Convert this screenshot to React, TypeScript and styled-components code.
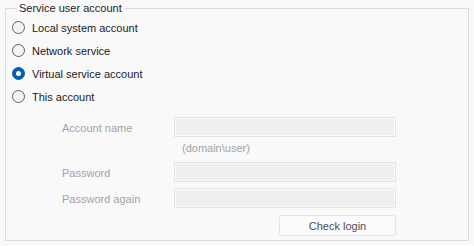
import React, { useState } from "react";
import styled, { createGlobalStyle } from "styled-components";

const GlobalStyle = createGlobalStyle`
  html, body {
    margin: 0;
    padding: 0;
    background: #f9f9f9;
  }
  body {
    font-family: "Liberation Sans", Arial, sans-serif;
    font-size: 11px;
    color: #1b1b1b;
  }
`;

const options = [
  "Local system account",
  "Network service",
  "Virtual service account",
  "This account",
];

const App = () => {
  const [selected, setSelected] = useState(2);
  const enabled = selected === 3;

  return (
    <Page>
      <GlobalStyle />
      <GroupBox>
        <Legend>Service user account</Legend>
        {options.map((label, i) => (
          <RadioRow key={label} onClick={() => setSelected(i)}>
            <RadioCircle $checked={selected === i} />
            <RadioLabel>{label}</RadioLabel>
          </RadioRow>
        ))}

        <FormGrid>
          <FieldLabel $disabled={!enabled}>Account name</FieldLabel>
          <TextBox disabled={!enabled} />
          <span />
          <Hint $disabled={!enabled}>(domain\user)</Hint>
          <FieldLabel $disabled={!enabled}>Password</FieldLabel>
          <TextBox type="password" disabled={!enabled} />
          <FieldLabel $disabled={!enabled}>Password again</FieldLabel>
          <TextBox type="password" disabled={!enabled} />
          <span />
          <ButtonRow>
            <CheckButton disabled={!enabled}>Check login</CheckButton>
          </ButtonRow>
        </FormGrid>
      </GroupBox>
    </Page>
  );
};

const Page = styled.div`
  width: 474px;
  height: 246px;
  padding: 0 5px;
  box-sizing: border-box;
`;

const GroupBox = styled.fieldset`
  margin: 0;
  padding: 0 0 0 5px;
  width: 464px;
  height: 241px;
  box-sizing: border-box;
  border: 1px solid #dcdcdc;
  border-radius: 0;
`;

const Legend = styled.legend`
  margin-left: 6px;
  padding: 0 2px;
  line-height: 16px;
  color: #1b1b1b;
`;

const RadioRow = styled.div`
  display: flex;
  align-items: center;
  height: 23px;
  cursor: default;
`;

const RadioCircle = styled.span<{ $checked: boolean }>`
  width: 13px;
  height: 13px;
  border-radius: 50%;
  box-sizing: border-box;
  margin-left: 1px;
  margin-right: 7px;
  flex-shrink: 0;
  position: relative;
  background: ${(p) => (p.$checked ? "#005fb8" : "#f4f4f4")};
  border: 1px solid ${(p) => (p.$checked ? "#005fb8" : "#606060")};

  &::after {
    content: "";
    display: ${(p) => (p.$checked ? "block" : "none")};
    position: absolute;
    left: 3px;
    top: 3px;
    width: 5px;
    height: 5px;
    border-radius: 50%;
    background: #ffffff;
  }
`;

const RadioLabel = styled.span`
  line-height: 16px;
`;

const FormGrid = styled.div`
  display: grid;
  grid-template-columns: 112px 222px;
  margin: 9px 0 0 51px;
  align-items: center;
`;

const FieldLabel = styled.span<{ $disabled: boolean }>`
  color: ${(p) => (p.$disabled ? "#a3a3a3" : "#1b1b1b")};
  margin-bottom: 6px;
  padding-top: 1px;
`;

const TextBox = styled.input`
  height: 20px;
  box-sizing: border-box;
  margin: 0 0 6px 0;
  border: 1px solid #e3e3e3;
  box-shadow: inset 0 0 0 1px #fafafa;
  background: #efefef;
  border-radius: 0;
  outline: none;
  font: inherit;
  padding: 0 4px;

  &:enabled {
    background: #ffffff;
    border-color: #8a8a8a;
  }
`;

const Hint = styled.span<{ $disabled: boolean }>`
  color: ${(p) => (p.$disabled ? "#a3a3a3" : "#5a5a5a")};
  padding-left: 8px;
  height: 19px;
  line-height: 11px;
`;

const ButtonRow = styled.div`
  display: flex;
  justify-content: flex-end;
  padding-top: 1px;
`;

const CheckButton = styled.button`
  width: 117px;
  height: 21px;
  border: 1px solid #e3e3e3;
  border-radius: 3px;
  background: #fbfbfb;
  color: #4c4c5c;
  font: inherit;
  padding: 0;
`;

export default App;
